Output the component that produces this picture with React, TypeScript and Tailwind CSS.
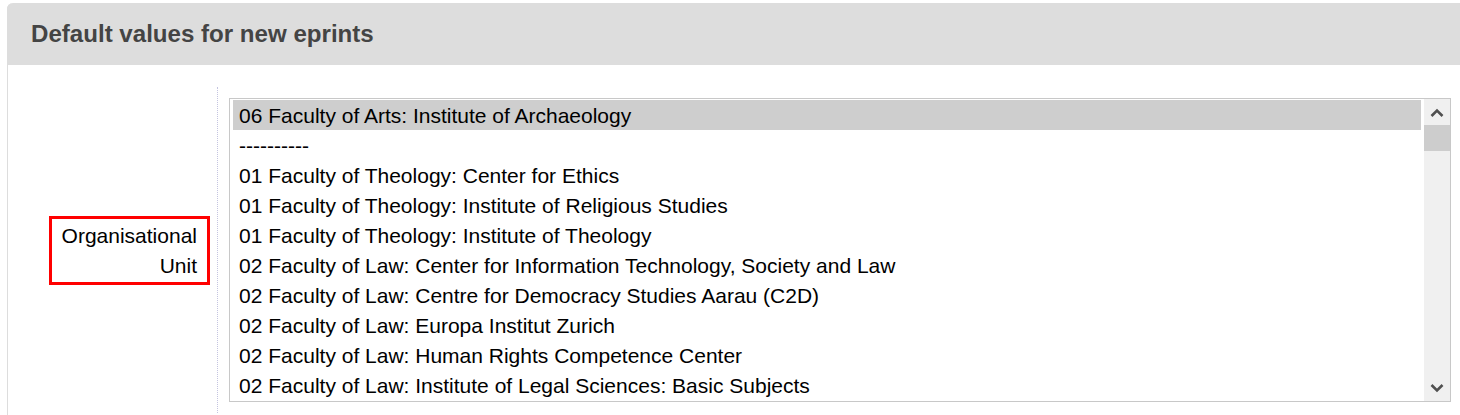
const units = [
    '06 Faculty of Arts: Institute of Archaeology',
    '----------',
    '01 Faculty of Theology: Center for Ethics',
    '01 Faculty of Theology: Institute of Religious Studies',
    '01 Faculty of Theology: Institute of Theology',
    '02 Faculty of Law: Center for Information Technology, Society and Law',
    '02 Faculty of Law: Centre for Democracy Studies Aarau (C2D)',
    '02 Faculty of Law: Europa Institut Zurich',
    '02 Faculty of Law: Human Rights Competence Center',
    '02 Faculty of Law: Institute of Legal Sciences: Basic Subjects',
]

function Chevron({ up }: { up?: boolean }) {
    return (
        <svg width="14" height="9" viewBox="0 0 14 9" className="block">
            <path d={up ? 'M1.5 8 L7 2.5 L12.5 8' : 'M1.5 1 L7 6.5 L12.5 1'} fill="none" stroke="#505050" strokeWidth="2.6" />
        </svg>
    )
}

export default function App() {
    const selected = 0
    return (
        <div className="pt-[3px] pl-[7px] bg-white font-['Liberation_Sans',Arial,sans-serif]">
            <div className="rounded-tl-[6px] border-l border-[#dddddd] min-h-[412px]">
                <div className="h-[62px] bg-[#dddddd] rounded-tl-[6px] -ml-px flex items-center pl-[24px]">
                    <h2 className="text-[24.1px] font-bold text-[#444444] leading-none">Default values for new eprints</h2>
                </div>

                <div className="pt-[22px] flex">
                    <div className="w-[210px] border-r border-dotted border-[#c4c4e0] flex items-center justify-end pr-[7px]">
                        <div className="border-[3px] border-[#ff0000] text-right text-[21px] leading-[30px] text-black pl-[10px] pr-[10px] pt-[2px] pb-[1px]">
                            Organisational<br />Unit
                        </div>
                    </div>

                    <div className="flex-1 pl-[11px] pt-[11px] pb-[11px]">
                        <div className="w-[1222px] h-[304px] border border-[#c8c8c8] flex">
                            <div className="flex-1 pl-[3px] pr-[3px] pt-px overflow-hidden">
                                {units.map((u, i) => (
                                    <div key={i}
                                        className={`h-[30px] leading-[31px] pl-[6px] text-[21px] text-black whitespace-nowrap ${i === selected ? 'bg-[#cecece]' : ''}`}>
                                        {u}
                                    </div>
                                ))}
                            </div>
                            <div className="w-[26px] bg-[#f0f0f0] flex flex-col items-center">
                                <div className="h-[26px] flex items-center justify-center"><Chevron up /></div>
                                <div className="w-full h-[26px] bg-[#cdcdcd]" />
                                <div className="flex-1" />
                                <div className="h-[26px] flex items-center justify-center"><Chevron /></div>
                            </div>
                        </div>
                    </div>
                </div>
            </div>
        </div>
    )
}
